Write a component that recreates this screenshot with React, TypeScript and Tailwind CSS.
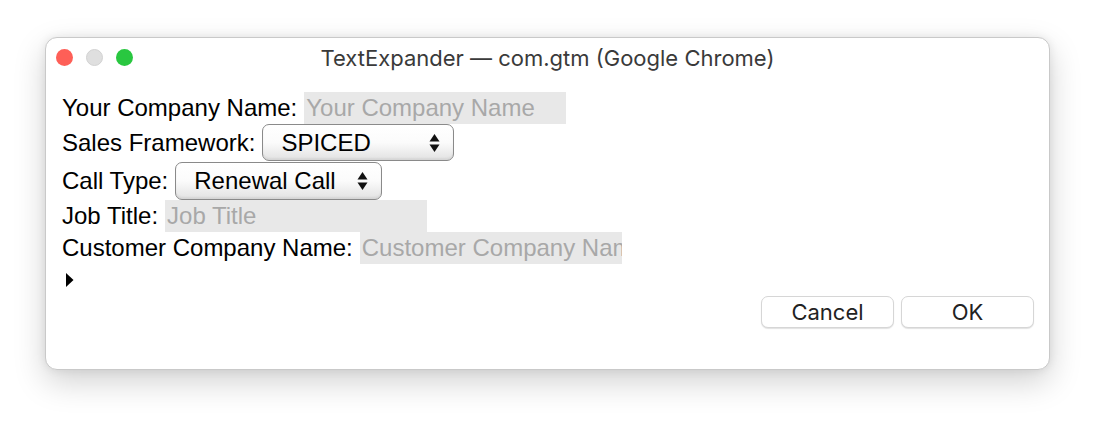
import React from "react";

const body = { fontFamily: '"Liberation Sans", Arial, sans-serif' };
const sys = { fontFamily: 'Inter, "Liberation Sans", sans-serif' };

function Arrows() {
  return (
    <svg width="11" height="20" viewBox="0 0 11 20" className="shrink-0">
      <path d="M5.5 1 L10.5 8.5 L0.5 8.5 Z" fill="#111" />
      <path d="M0.5 11.5 L10.5 11.5 L5.5 19 Z" fill="#111" />
    </svg>
  );
}

function Select({ value, width, height }: { value: string; width: number; height: number }) {
  return (
    <div
      className="ml-[7px] flex items-center justify-between rounded-[7px] border border-[#8a8a8a] bg-gradient-to-b from-[#ffffff] via-[#fbfbfb] to-[#e2e2e2] pl-[18px] pr-[13px] shadow-[inset_0_-2px_2px_rgba(0,0,0,0.06)]"
      style={{ width, height }}
    >
      <span className="text-[24px] leading-none text-black">{value}</span>
      <Arrows />
    </div>
  );
}

function Input({ placeholder }: { placeholder: string }) {
  return (
    <div className="ml-[7px] flex h-[32px] w-[262px] items-center overflow-hidden whitespace-nowrap bg-[#e8e8e8] pl-[2px] text-[24px] leading-none text-[#a8a8a8]">
      {placeholder}
    </div>
  );
}

export default function App() {
  return (
    <div className="min-h-[424px] w-[1096px] bg-white pl-[45px] pt-[37px]" style={body}>
      <div className="flex h-[333px] w-[1005px] flex-col rounded-[12px] border border-[#c9c9c9] bg-white shadow-[0_12px_32px_rgba(0,0,0,0.18),0_0_10px_rgba(0,0,0,0.08)]">
        <div className="relative flex h-[38px] items-center">
          <div className="flex items-center gap-[13px] pl-[10px] pt-[1px]">
            <div className="h-[17px] w-[17px] rounded-full bg-[#fe5f57]" />
            <div className="h-[17px] w-[17px] rounded-full bg-[#dfdfdf] border border-[#d2d2d2]" />
            <div className="h-[17px] w-[17px] rounded-full bg-[#29c740]" />
          </div>
          <div
            className="absolute inset-x-0 top-[7px] text-center text-[22px] leading-[26px] text-[#3a3a3a]"
            style={sys}
          >
            TextExpander — com.gtm (Google Chrome)
          </div>
        </div>
        <div className="flex flex-col pl-[16px] pt-[16px] text-[24px] leading-none text-black">
          <div className="flex h-[32px] items-center">
            <span>Your Company Name:</span>
            <Input placeholder="Your Company Name" />
          </div>
          <div className="flex h-[37px] items-center">
            <span>Sales Framework:</span>
            <Select value="SPICED" width={192} height={37} />
          </div>
          <div className="flex h-[39px] items-center">
            <span>Call Type:</span>
            <Select value="Renewal Call" width={207} height={38} />
          </div>
          <div className="flex h-[32px] items-center">
            <span>Job Title:</span>
            <Input placeholder="Job Title" />
          </div>
          <div className="flex h-[32px] items-center">
            <span>Customer Company Name:</span>
            <Input placeholder="Customer Company Name" />
          </div>
          <div className="flex h-[32px] items-center pl-[4px]">
            <svg width="8" height="14" viewBox="0 0 8 14">
              <path d="M0 0 L7.5 7 L0 14 Z" fill="#000" />
            </svg>
          </div>
        </div>
        <div className="flex justify-end gap-[7px] pr-[15px]" style={sys}>
          <button className="flex h-[32px] w-[133px] items-center justify-center rounded-[7px] border border-[#d6d6d6] bg-white text-[22px] text-[#222] shadow-[0_1px_1px_rgba(0,0,0,0.12)]">
            Cancel
          </button>
          <button className="flex h-[32px] w-[133px] items-center justify-center rounded-[7px] border border-[#d6d6d6] bg-white text-[22px] text-[#222] shadow-[0_1px_1px_rgba(0,0,0,0.12)]">
            OK
          </button>
        </div>
      </div>
    </div>
  );
}
